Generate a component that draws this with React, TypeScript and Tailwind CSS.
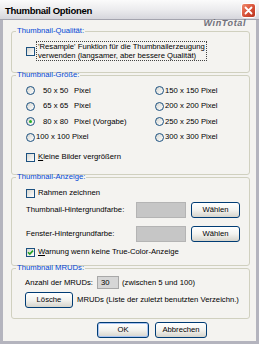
import React from "react";

const Check = ({ checked = false }: { checked?: boolean }) => (
  <span className="relative w-[9px] h-[9px] shrink-0 border border-[#1c5180] bg-linear-to-br from-[#d6d6d0] to-white flex items-center justify-center">
    {checked && (
      <svg width="7" height="7" viewBox="0 0 7 7">
        <path d="M1 3.2 L2.8 5 L6 1.6" stroke="#21a121" strokeWidth="1.6" fill="none" />
      </svg>
    )}
  </span>
);

const Radio = ({ checked = false }: { checked?: boolean }) => (
  <span className="w-[9px] h-[9px] shrink-0 rounded-full border border-[#1c5180] bg-linear-to-br from-[#d6d6d0] to-white flex items-center justify-center">
    {checked && <span className="w-[3px] h-[3px] rounded-full bg-[#26b026]" />}
  </span>
);

const Btn = ({ label, w, def = false }: { label: string; w: string; def?: boolean }) => (
  <div
    className={`${w} h-[16px] shrink-0 rounded-[3px] border border-[#003c74] bg-linear-to-b from-white via-[#f3f3ef] to-[#d6d4cc] flex items-center justify-center text-[7.7px] text-black ${
      def ? "shadow-[inset_0_0_0_1px_#a9c4f2]" : ""
    }`}
  >
    {label}
  </div>
);

const Legend = ({ children }: { children: React.ReactNode }) => (
  <legend className="ml-[4px] px-[1px] text-[7.7px] leading-[8px] text-[#0046d5]">{children}</legend>
);

export default function App() {
  return (
    <div className="relative w-[259px] h-[344px] bg-[#b4b4be] flex flex-col font-['Liberation_Sans',Arial,sans-serif] text-[7.7px] text-black overflow-hidden">
      {/* title bar */}
      <div className="h-[20px] shrink-0 bg-linear-to-b from-[#fbfbfb] via-[#ececee] to-[#d6d6dc] border-b border-[#a4a4ae] flex items-start pl-[5px] pt-[5px]">
        <span className="text-[9.5px] leading-[11px] font-bold tracking-[-0.3px] text-black">Thumbnail Optionen</span>
      </div>
      <div className="absolute top-[3px] right-[3px] w-[15px] h-[15px] rounded-[3px] border border-white bg-linear-to-br from-[#ef8a6c] via-[#d9533a] to-[#b8321c] flex items-center justify-center">
        <svg width="9" height="9" viewBox="0 0 9 9">
          <path d="M1.5 1.5 L7.5 7.5 M7.5 1.5 L1.5 7.5" stroke="white" strokeWidth="1.8" strokeLinecap="round" />
        </svg>
      </div>
      <span className="absolute top-[19px] right-[13px] text-[9px] leading-[9px] italic font-bold tracking-[0.6px] text-[#70707a]">WinTotal</span>

      {/* body */}
      <div className="flex-1 mx-[3px] mb-[3px] bg-[#f4f3f0] flex flex-col pt-[7px]">
        {/* Group 1 */}
        <fieldset className="ml-[8px] w-[239px] h-[46px] border border-[#d0d0bf] rounded-[3px]">
          <Legend>Thumbnail-Qualität:</Legend>
          <div className="pt-[6px] pl-[14px] flex items-center">
            <Check />
            <div className="ml-[1px] w-[171px] border border-dotted border-[#444] px-[1px] leading-[9px] whitespace-nowrap">
              'Resample' Funktion für die Thumbnailerzeugung
              <br />
              verwenden (langsamer, aber bessere Qualität)
            </div>
          </div>
        </fieldset>

        {/* Group 2 */}
        <fieldset className="-mt-[2px] ml-[8px] w-[239px] h-[104px] border border-[#d0d0bf] rounded-[3px]">
          <Legend>Thumbnail-Größe:</Legend>
          <div className="pt-[4px] pl-[14px] grid grid-cols-[129px_1fr] auto-rows-[15.5px]">
            <div className="flex items-center"><Radio /><span className="ml-[8px] w-[31px]">50 x 50</span><span>Pixel</span></div>
            <div className="flex items-center"><Radio /><span className="ml-[1px]">150 x 150 Pixel</span></div>
            <div className="flex items-center"><Radio /><span className="ml-[8px] w-[31px]">65 x 65</span><span>Pixel</span></div>
            <div className="flex items-center"><Radio /><span className="ml-[1px]">200 x 200 Pixel</span></div>
            <div className="flex items-center"><Radio checked /><span className="ml-[8px] w-[31px]">80 x 80</span><span>Pixel (Vorgabe)</span></div>
            <div className="flex items-center"><Radio /><span className="ml-[1px]">250 x 250 Pixel</span></div>
            <div className="flex items-center"><Radio /><span className="ml-[1px]">100 x 100 Pixel</span></div>
            <div className="flex items-center"><Radio /><span className="ml-[1px]">300 x 300 Pixel</span></div>
          </div>
          <div className="mt-[7px] h-[10px] pl-[14px] flex items-center">
            <Check />
            <span className="ml-[3px]"><span className="underline">K</span>leine Bilder vergrößern</span>
          </div>
        </fieldset>

        {/* Group 3 */}
        <fieldset className="-mt-[2px] ml-[8px] w-[239px] h-[93px] border border-[#d0d0bf] rounded-[3px]">
          <Legend>Thumbnail-Anzeige:</Legend>
          <div className="pl-[14px] flex flex-col">
            <div className="mt-[7px] h-[10px] flex items-center">
              <Check />
              <span className="ml-[3px]">Rahmen zeichnen</span>
            </div>
            <div className="mt-[4px] h-[16px] flex items-center">
              <span className="w-[110px]">Thumbnail-Hintergrundfarbe:</span>
              <div className="w-[50px] h-[16px] bg-[#c6c6c6] border border-[#b4b4b4]" />
              <div className="ml-[5px]"><Btn label="Wählen" w="w-[49px]" /></div>
            </div>
            <div className="mt-[8px] h-[16px] flex items-center">
              <span className="w-[110px]">Fenster-Hintergrundfarbe:</span>
              <div className="w-[50px] h-[16px] bg-[#c6c6c6] border border-[#b4b4b4]" />
              <div className="ml-[5px]"><Btn label="Wählen" w="w-[49px]" /></div>
            </div>
            <div className="mt-[5px] h-[10px] flex items-center">
              <Check checked />
              <span className="ml-[3px]"><span className="underline">W</span>arnung wenn keine True-Color-Anzeige</span>
            </div>
          </div>
        </fieldset>

        {/* Group 4 */}
        <fieldset className="-mt-[2px] ml-[8px] w-[239px] h-[55px] border border-[#d0d0bf] rounded-[3px]">
          <Legend>Thumbnail MRUDs:</Legend>
          <div className="pl-[13px] flex flex-col">
            <div className="mt-[4px] h-[13px] flex items-center">
              <span className="w-[72px]">Anzahl der MRUDs:</span>
              <div className="w-[22px] h-[13px] bg-[#d6d6d6] border border-[#a8a8a8] flex items-center pl-[3px]">30</div>
              <span className="ml-[3px]">(zwischen 5 und 100)</span>
            </div>
            <div className="mt-[3px] h-[16px] flex items-center">
              <Btn label="Lösche" w="w-[48px]" />
              <span className="ml-[4px] whitespace-nowrap">MRUDs (Liste der zuletzt benutzten Verzeichn.)</span>
            </div>
          </div>
        </fieldset>

        {/* Buttons */}
        <div className="mt-[3px] flex">
          <div className="ml-[94px]"><Btn label="OK" w="w-[52px]" def /></div>
          <div className="ml-[6px]"><Btn label="Abbrechen" w="w-[52px]" /></div>
        </div>
      </div>
    </div>
  );
}
